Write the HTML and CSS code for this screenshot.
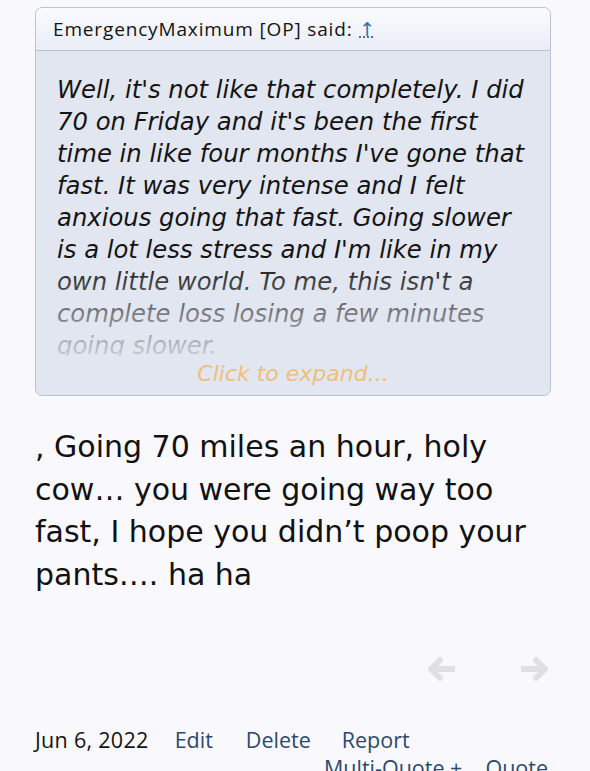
FILE: index.html
```html
<!DOCTYPE html>
<html>
<head>
<meta charset="utf-8">
<link rel="stylesheet" href="styles.css">
</head>
<body>
<div class="post">
  <div class="quote">
    <div class="quote-head">EmergencyMaximum [OP] said: <a class="up" href="#">&uarr;</a></div>
    <div class="quote-body">
      <div class="quote-text">Well, it's not like that completely. I did<br>70 on Friday and it's been the first<br>time in like four months I've gone that<br>fast. It was very intense and I felt<br>anxious going that fast. Going slower<br>is a lot less stress and I'm like in my<br>own little world. To me, this isn't a<br>complete loss losing a few minutes<br>going slower.</div>
      <div class="fade"></div>
    </div>
    <div class="expand">Click to expand...</div>
  </div>
  <div class="message">, Going 70 miles an hour, holy<br>cow… you were going way too<br>fast, I hope you didn’t poop your<br>pants…. ha ha</div>
  <div class="nav-arrows">
    <svg class="arrow" viewBox="0 0 28 28" width="28" height="28"><path d="M26 14H4M13 5L4 14l9 9" fill="none" stroke="#dfdfe4" stroke-width="6" stroke-linecap="round" stroke-linejoin="round"/></svg>
    <svg class="arrow" viewBox="0 0 28 28" width="28" height="28"><path d="M2 14h22M15 5l9 9-9 9" fill="none" stroke="#dfdfe4" stroke-width="6" stroke-linecap="round" stroke-linejoin="round"/></svg>
  </div>
  <div class="footer">
    <div class="row1">
      <span class="date">Jun 6, 2022</span>
      <a class="edit" href="#">Edit</a>
      <a class="del" href="#">Delete</a>
      <a class="rep" href="#">Report</a>
    </div>
    <div class="row2">
      <a href="#">Multi-Quote +</a>
      <a href="#">Quote</a>
    </div>
  </div>
</div>
</body>
</html>
```
FILE: styles.css
```css
html, body {
  margin: 0;
  padding: 0;
  background: #f8f8fd;
}
body {
  overflow: hidden;
  height: 771px;
}
.post {
  padding: 7px 39px 0 35px;
}
.quote {
  border: 1px solid #b8c3d6;
  border-radius: 7px;
  background: #e2e6f1;
  overflow: hidden;
}
.quote-head {
  height: 43px;
  box-sizing: border-box;
  padding: 8px 0 0 17px;
  background: linear-gradient(#fafbfe, #e9edf6);
  border-bottom: 1px solid #b8c3d6;
  font-family: "Open Sans", sans-serif;
  font-size: 19px;
  letter-spacing: 0.85px;
  color: #141414;
}
.up {
  font-family: "DejaVu Sans", sans-serif;
  font-size: 19px;
  color: #3a6fa8;
  text-decoration: underline dotted;
  letter-spacing: 0;
  margin-left: 1px;
}
.quote-body {
  position: relative;
  height: 282px;
  overflow: hidden;
  margin-top: 23px;
  padding: 0 8px 0 21px;
}
.quote-text {
  font-family: "DejaVu Sans", Verdana, sans-serif;
  font-style: italic;
  font-size: 24.3px;
  line-height: 32px;
  color: #141414;
  white-space: nowrap;
}
.fade {
  position: absolute;
  left: 0;
  right: 0;
  bottom: 0;
  height: 96px;
  background: linear-gradient(rgba(226,230,241,0), rgba(226,230,241,0.88));
}
.expand {
  text-align: center;
  height: 39px;
  font-family: "DejaVu Sans", Verdana, sans-serif;
  font-style: italic;
  font-size: 22px;
  color: #efbf7a;
  line-height: 36px;
}
.message {
  margin-top: 30px;
  font-family: "DejaVu Sans", Verdana, sans-serif;
  font-size: 30px;
  line-height: 42.5px;
  color: #111;
  white-space: nowrap;
}
.nav-arrows {
  display: flex;
  justify-content: flex-end;
  gap: 66px;
  margin-top: 59px;
  margin-right: 2px;
}
.footer {
  margin-top: 43px;
  font-family: "Open Sans", sans-serif;
  font-size: 21.5px;
}
.row1 {
  display: flex;
  line-height: 28px;
}
.date { color: #141414; letter-spacing: 0.3px; }
.edit { margin-left: 26px; }
.del { margin-left: 33px; }
.rep { margin-left: 31px; }
.footer a {
  color: #2c4a6e;
  text-decoration: none;
}
.row2 {
  display: flex;
  justify-content: flex-end;
  gap: 23px;
  line-height: 28px;
  margin-right: 3px;
}
```
